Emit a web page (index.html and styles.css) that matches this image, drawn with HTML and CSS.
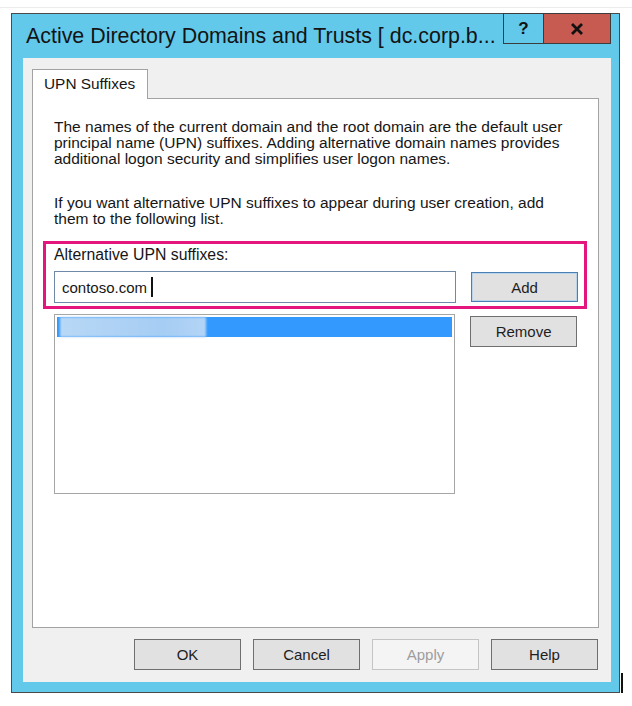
FILE: index.html
```html
<!DOCTYPE html>
<html>
<head>
  <meta charset="utf-8">
  <title>Active Directory Domains and Trusts</title>
  <link rel="stylesheet" href="styles.css">
</head>
<body>
  <div class="screen-line"></div>

  <div class="window">
    <div class="titlebar">
      <span class="title">Active Directory Domains and Trusts [ dc.corp.b...</span>
      <div class="caption">
        <span class="cap-btn help">?</span>
        <span class="cap-btn close">
          <svg width="14" height="12" viewBox="0 0 14 12">
            <path d="M2 1 L12 11 M12 1 L2 11" stroke="#111" stroke-width="2.8" fill="none"/>
          </svg>
        </span>
      </div>
    </div>

    <div class="client">
      <div class="tab">UPN Suffixes</div>

      <div class="panel">
        <p>The names of the current domain and the root domain are the default user<br>
        principal name (UPN) suffixes. Adding alternative domain names provides<br>
        additional logon security and simplifies user logon names.</p>
        <p>If you want alternative UPN suffixes to appear during user creation, add<br>
        them to the following list.</p>

        <div class="highlight">
          <div class="label">Alternative UPN suffixes:</div>
          <div class="row">
            <div class="textbox">contoso.com<span class="caret"></span></div>
            <button class="btn default">Add</button>
          </div>
        </div>

        <div class="row list-row">
          <div class="listbox">
            <div class="item selected"><span class="redacted"></span></div>
          </div>
          <button class="btn remove">Remove</button>
        </div>
      </div>

      <div class="footer">
        <button class="btn">OK</button>
        <button class="btn">Cancel</button>
        <button class="btn" disabled>Apply</button>
        <button class="btn">Help</button>
      </div>
    </div>
  </div>

  <div class="mouse-caret"></div>
</body>
</html>
```

FILE: styles.css
```css
body {
  margin: 0;
  width: 632px;
  height: 706px;
  overflow: hidden;
  position: relative;
  background: #fff;
  font-family: "Liberation Sans", Arial, sans-serif;
  color: #161616;
}
.screen-line {
  height: 1px;
  margin-top: 7px;
  background: #ececec;
}
.window {
  margin: 5px 0 0 11px;
  width: 609px;
  height: 680px;
  box-sizing: border-box;
  border: 1px solid #4a4a4a;
  background: #62c9ea;
  display: flex;
  flex-direction: column;
}
.titlebar {
  height: 44px;
  flex: none;
  display: flex;
  align-items: flex-start;
}
.title {
  flex: 1;
  padding-left: 14px;
  font-size: 21.4px;
  line-height: 44px;
  white-space: nowrap;
  color: #141414;
}
.caption {
  display: flex;
  margin: -1px 8px 0 0;
}
.cap-btn {
  height: 31px;
  box-sizing: border-box;
  border: 1px solid #3c3c3c;
  display: flex;
  align-items: center;
  justify-content: center;
}
.help {
  width: 40px;
  border-right: none;
  font-weight: bold;
  font-size: 17px;
  color: #111;
}
.close {
  width: 68px;
  background: #c75b52;
}
.client {
  flex: 1;
  margin: 0 8px 10px 11px;
  padding: 11px 12px 12px 9px;
  background: #f0f0f0;
  display: flex;
  flex-direction: column;
}
.tab {
  width: 116px;
  height: 30px;
  box-sizing: border-box;
  margin-bottom: -1px;
  padding-left: 11px;
  border: 1px solid #a3a3a3;
  border-bottom: none;
  background: #fff;
  position: relative;
  z-index: 1;
  font-size: 15.4px;
  line-height: 28px;
}
.panel {
  height: 530px;
  box-sizing: border-box;
  border: 1px solid #a3a3a3;
  background: #fff;
  padding: 20px 21px 0;
  font-size: 15.5px;
}
.panel p {
  margin: 0 0 28px;
  line-height: 16px;
  white-space: nowrap;
}
.panel p + p { margin-bottom: 14px; }
.highlight {
  margin: 0 -10px 0 -11px;
  padding: 2px 6px 3px 8px;
  border: 3px solid #e5157e;
}
.label {
  line-height: 18px;
  margin-bottom: 7px;
  font-size: 15.8px;
}
.row {
  display: flex;
  align-items: center;
  gap: 15px;
}
.textbox {
  width: 402px;
  height: 32px;
  box-sizing: border-box;
  border: 1px solid #6f8aa7;
  background: #fff;
  padding-left: 7px;
  display: flex;
  align-items: center;
  font-size: 15px;
}
.caret {
  width: 2px;
  height: 20px;
  margin-left: 4px;
  background: #111;
}
.btn {
  width: 107px;
  height: 31px;
  box-sizing: border-box;
  padding: 0;
  border: 1px solid #6f6f6f;
  background: #e1e1e1;
  font-family: "Liberation Sans", Arial, sans-serif;
  font-size: 15px;
  color: #1e1e1e;
}
.btn.default {
  height: 30px;
  border-color: #4a7fb3;
  box-shadow: inset 0 0 0 1px #b9d3ea;
}
.btn:disabled {
  background: #f4f4f4;
  border-color: #c4c4c4;
  color: #9d9d9d;
}
.list-row {
  margin-top: 5px;
  align-items: flex-start;
}
.listbox {
  width: 402px;
  height: 180px;
  box-sizing: border-box;
  border: 1px solid #a6a6a6;
  padding: 2px;
}
.item {
  height: 20px;
}
.item.selected { background: #3399ff; }
.redacted {
  display: block;
  width: 146px;
  height: 20px;
  margin-left: 3px;
  background: linear-gradient(90deg, #b8d8f6, #a6cdf4 70%, #b3d4f6);
  filter: blur(1px);
}
.remove { margin-top: 2px; }
.footer {
  display: flex;
  justify-content: flex-end;
  gap: 12px;
  margin-top: 11px;
  padding-right: 1px;
}
.mouse-caret {
  position: absolute;
  left: 621px;
  top: 673px;
  width: 2px;
  height: 20px;
  background: #111;
}
```
